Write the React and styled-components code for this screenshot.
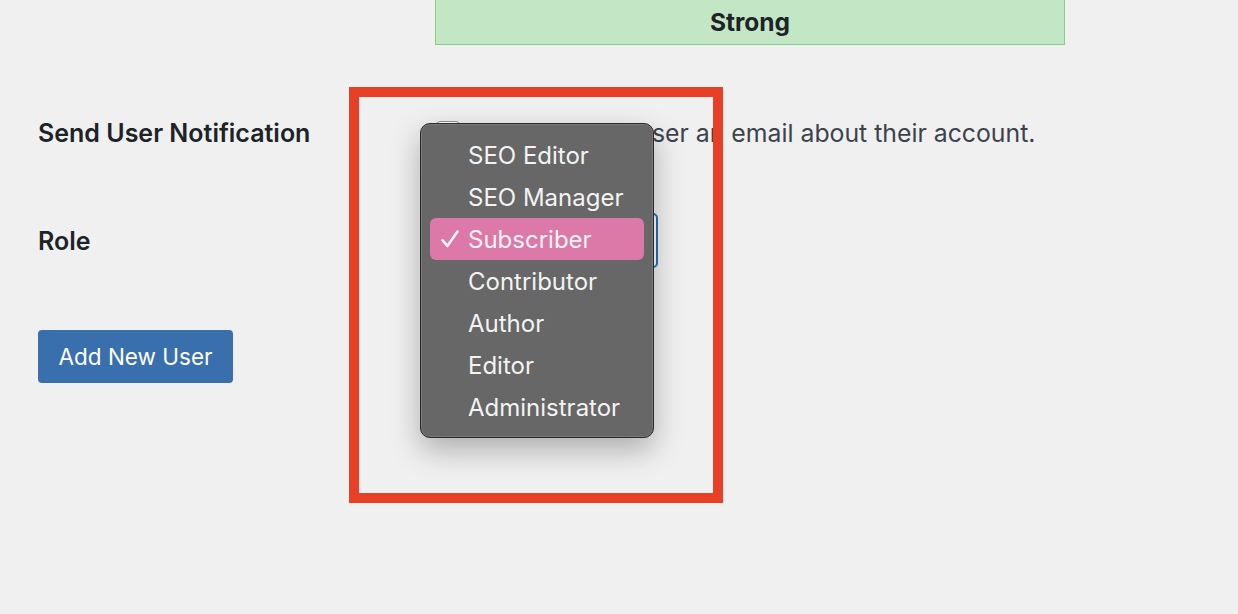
import React from "react";
import styled, { createGlobalStyle } from "styled-components";

const roles = [
  "SEO Editor",
  "SEO Manager",
  "Subscriber",
  "Contributor",
  "Author",
  "Editor",
  "Administrator",
];

function CheckIcon() {
  return (
    <Check viewBox="0 0 20 20" width="20" height="20">
      <path
        d="M2.5 11.2 L7.4 17 L17.5 2.5"
        fill="none"
        stroke="#f5f5f5"
        strokeWidth="2.6"
        strokeLinecap="round"
        strokeLinejoin="round"
      />
    </Check>
  );
}

function App() {
  return (
    <>
      <GlobalStyle />
      <Page>
        <StrengthRow>
          <span />
          <StrengthBox>Strong</StrengthBox>
        </StrengthRow>

        <FormTable>
          <Label>Send User Notification</Label>
          <Field>
            <Checkbox />
            <Description>Send the new user an email about their account.</Description>
          </Field>

          <Label>Role</Label>
          <Field>
            <SelectWrap>
              <Select>Subscriber</Select>
              <Menu>
                {roles.map((r) => (
                  <MenuItem key={r} $active={r === "Subscriber"}>
                    {r === "Subscriber" && <CheckIcon />}
                    {r}
                  </MenuItem>
                ))}
              </Menu>
            </SelectWrap>
          </Field>
        </FormTable>

        <SubmitButton>Add New User</SubmitButton>

        <Annotation />
      </Page>
    </>
  );
}

const GlobalStyle = createGlobalStyle`
  body {
    margin: 0;
    background: #f0f0f1;
    font-family: Inter, "Noto Sans", sans-serif;
    color: #1d2327;
  }
`;

const Page = styled.div`
  position: relative;
  height: 614px;
  padding-left: 38px;
  overflow: hidden;
`;

const StrengthRow = styled.div`
  display: grid;
  grid-template-columns: 397px 630px;
`;

const StrengthBox = styled.div`
  height: 44px;
  margin-top: -1px;
  background: #c3e6c5;
  border: 1px solid #82d384;
  display: flex;
  align-items: center;
  justify-content: center;
  font-size: 24.5px;
  font-weight: 700;
  color: #1d2327;
`;

const FormTable = styled.div`
  display: grid;
  grid-template-columns: 398px 1fr;
  grid-template-rows: 46px 55px;
  row-gap: 57px;
  margin-top: 65px;
`;

const Label = styled.div`
  display: flex;
  align-items: center;
  font-size: 25px;
  font-weight: 600;
  color: #1d2327;
`;

const Field = styled.div`
  display: flex;
  align-items: center;
  gap: 10px;
`;

const Checkbox = styled.span`
  width: 24px;
  height: 24px;
  box-sizing: border-box;
  border: 1px solid #8c8f94;
  border-radius: 4px;
  background: #fff;
`;

const Description = styled.span`
  font-size: 24.8px;
  color: #3c434a;
  white-space: nowrap;
`;

const SelectWrap = styled.div`
  position: relative;
`;

const Select = styled.div`
  width: 222px;
  height: 55px;
  box-sizing: border-box;
  border: 2px solid #2d6db4;
  border-radius: 5px;
  background: #fff;
  display: flex;
  align-items: center;
  padding-left: 16px;
  font-size: 24px;
  color: #2c3338;
`;

const Menu = styled.div`
  position: absolute;
  left: -16px;
  top: -90px;
  width: 234px;
  box-sizing: border-box;
  padding: 10px 0 9px;
  background: #666766;
  border: 1px solid #2a2a2a;
  border-radius: 10px;
  box-shadow: inset 0 0 0 1px rgba(255, 255, 255, 0.12),
    0 12px 30px rgba(0, 0, 0, 0.28);
  display: flex;
  flex-direction: column;
`;

const MenuItem = styled.div`
  position: relative;
  height: 42px;
  margin: 0 9px;
  padding-left: 38px;
  display: flex;
  align-items: center;
  border-radius: 6px;
  font-size: 24px;
  color: #f3f3f3;
  white-space: nowrap;
  background: ${(p) => (p.$active ? "#dc79a8" : "transparent")};
`;

const Check = styled.svg`
  position: absolute;
  left: 10px;
  top: 11px;
`;

const SubmitButton = styled.button`
  margin-top: 62px;
  width: 195px;
  height: 53px;
  border: none;
  border-radius: 4px;
  background: #3a6fae;
  color: #fff;
  font-family: Inter, "Noto Sans", sans-serif;
  font-size: 22.5px;
  padding: 0;
`;

const Annotation = styled.div`
  position: absolute;
  left: 349px;
  top: 87px;
  width: 374px;
  height: 416px;
  box-sizing: border-box;
  border: 10px solid #e84026;
  pointer-events: none;
`;

export default App;
